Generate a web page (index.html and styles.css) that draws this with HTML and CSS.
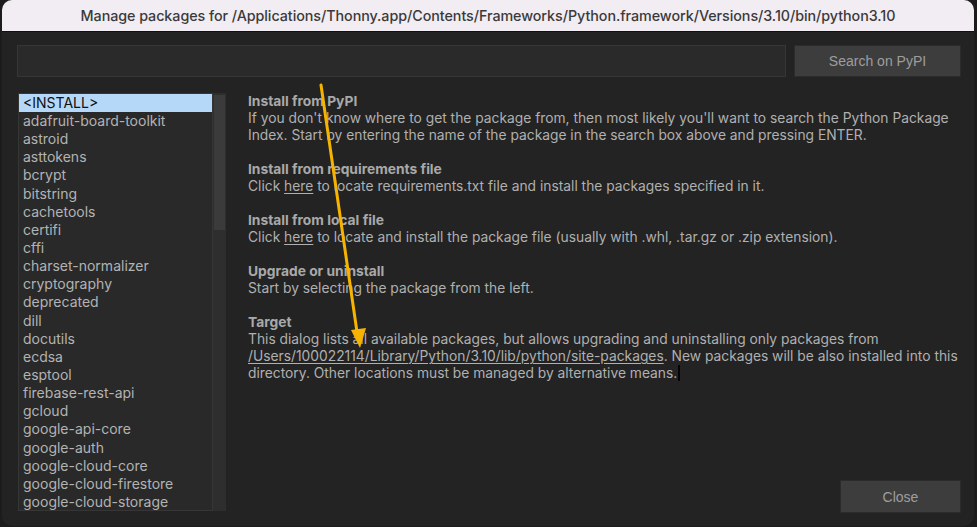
FILE: index.html
```html
<!DOCTYPE html>
<html>
<head>
<meta charset="utf-8">
<link rel="stylesheet" href="styles.css">
</head>
<body>
<div class="window">
  <div class="titlebar">Manage packages for /Applications/Thonny.app/Contents/Frameworks/Python.framework/Versions/3.10/bin/python3.10</div>
  <div class="content">
    <div class="search-row">
      <div class="search-input"></div>
      <div class="btn search-btn">Search on PyPI</div>
    </div>
    <div class="main">
      <div class="list-wrap">
        <ul class="list">
          <li class="selected">&lt;INSTALL&gt;</li>
          <li>adafruit-board-toolkit</li>
          <li>astroid</li>
          <li>asttokens</li>
          <li>bcrypt</li>
          <li>bitstring</li>
          <li>cachetools</li>
          <li>certifi</li>
          <li>cffi</li>
          <li>charset-normalizer</li>
          <li>cryptography</li>
          <li>deprecated</li>
          <li>dill</li>
          <li>docutils</li>
          <li>ecdsa</li>
          <li>esptool</li>
          <li>firebase-rest-api</li>
          <li>gcloud</li>
          <li>google-api-core</li>
          <li>google-auth</li>
          <li>google-cloud-core</li>
          <li>google-cloud-firestore</li>
          <li>google-cloud-storage</li>
        </ul>
        <div class="scrollbar"><div class="thumb"></div></div>
      </div>
      <div class="info">
        <div class="sections">
          <section>
            <h3>Install from PyPI</h3>
            <p>If you don't know where to get the package from, then most likely you'll want to search the Python Package Index. Start by entering the name of the package in the search box above and pressing ENTER.</p>
          </section>
          <section>
            <h3>Install from requirements file</h3>
            <p>Click <u>here</u> to locate requirements.txt file and install the packages specified in it.</p>
          </section>
          <section>
            <h3>Install from local file</h3>
            <p>Click <u>here</u> to locate and install the package file (usually with .whl, .tar.gz or .zip extension).</p>
          </section>
          <section>
            <h3>Upgrade or uninstall</h3>
            <p>Start by selecting the package from the left.</p>
          </section>
          <section>
            <h3>Target</h3>
            <p>This dialog lists all available packages, but allows upgrading and uninstalling only packages from <u>/Users/100022114/Library/Python/3.10/lib/python/site-packages</u>. New packages will be also installed into this directory. Other locations must be managed by alternative means.<span class="caret"></span></p>
          </section>
        </div>
        <div class="footer">
          <div class="btn close-btn">Close</div>
        </div>
      </div>
    </div>
  </div>
  <svg class="arrow" width="977" height="527" viewBox="0 0 977 527">
    <line x1="321" y1="85" x2="357" y2="332" stroke="#f6b400" stroke-width="3" stroke-linecap="round"/>
    <polygon points="360,348 351,330 366,328" fill="#f6b400"/>
  </svg>
</div>
</body>
</html>
```

FILE: styles.css
```css
html, body {
  margin: 0;
  padding: 0;
  background: #1c1c1c;
  width: 977px;
  height: 527px;
  overflow: hidden;
}
body {
  font-family: Inter, "Liberation Sans", Arial, sans-serif;
  padding-left: 2px;
}
.window {
  position: relative;
  width: 972px;
  height: 526px;
  background: #232323;
  border-radius: 10px;
  overflow: hidden;
  display: flex;
  flex-direction: column;
}
.titlebar {
  height: 31px;
  flex: none;
  background: #f2ecf3;
  border-bottom: 1px solid #111;
  color: #3a3a3a;
  font-size: 14.3px;
  font-weight: 500;
  line-height: 31px;
  text-align: center;
  letter-spacing: -0.05px;
}
.content {
  flex: 1;
  display: flex;
  flex-direction: column;
  padding: 13px 14px 13px 15px;
}
.search-row {
  display: flex;
  align-items: center;
  gap: 9px;
}
.search-input {
  flex: 1;
  height: 30px;
  background: #2a2a2a;
  border: 1px solid #363636;
}
.btn {
  background: #3d3d3d;
  color: #9d9d9d;
  font-family: "Liberation Sans", Arial, sans-serif;
  font-size: 14px;
  display: flex;
  align-items: center;
  justify-content: center;
  box-shadow: 0 0 0 1px #2b2b2b;
}
.search-btn {
  width: 165px;
  height: 30px;
}
.main {
  flex: 1;
  display: flex;
  margin-top: 16px;
}
.list-wrap {
  display: flex;
  height: 418px;
  margin-left: 1px;
}
.list {
  margin: 0;
  padding: 0;
  list-style: none;
  width: 193px;
  background: #292929;
  border: 1px solid #363636;
  overflow: hidden;
}
.list li {
  height: 18.15px;
  line-height: 18px;
  font-size: 14px;
  color: #b3b3b3;
  padding-left: 4px;
  white-space: nowrap;
}
.list li.selected {
  background: #b6d8f8;
  color: #111;
  height: 18px;
}
.scrollbar {
  width: 13px;
  background: #2e2e2e;
  padding: 2px 1px;
  box-sizing: border-box;
}
.thumb {
  height: 135px;
  background: #3b3b3b;
}
.info {
  flex: 1;
  display: flex;
  flex-direction: column;
  justify-content: space-between;
  margin-left: 22px;
}
.sections section {
  margin-bottom: 17px;
}
.sections h3 {
  margin: 0;
  font-size: 13.8px;
  line-height: 17px;
  font-weight: 700;
  color: #a9a9a9;
}
.sections p {
  margin: 0;
  font-size: 13.8px;
  line-height: 17px;
  color: #b0b0b0;
}
.sections u {
  text-decoration-thickness: 1px;
  text-underline-offset: 2px;
}
.caret {
  display: inline-block;
  width: 2px;
  height: 16px;
  margin-left: 1px;
  background: #050505;
  vertical-align: -3px;
}
.footer {
  display: flex;
  justify-content: flex-end;
  margin-bottom: 1px;
}
.close-btn {
  width: 119px;
  height: 31px;
}
.arrow {
  position: absolute;
  left: -2px;
  top: 0;
  pointer-events: none;
}
```
